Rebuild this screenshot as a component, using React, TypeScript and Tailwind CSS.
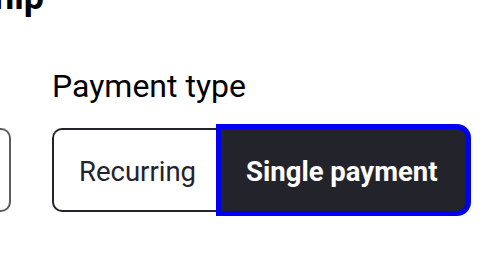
import { useState } from 'react'

type PaymentType = 'recurring' | 'single'

export default function App() {
  const [type, setType] = useState<PaymentType>('single')

  return (
    <div className="w-[500px] h-[264px] overflow-hidden bg-white font-['Roboto','Liberation_Sans',sans-serif] text-[#23232b]">
      {/* page heading, scrolled mostly out of view */}
      <div className="-mt-[23px] w-[44px] flex justify-end">
        <h1 className="shrink-0 whitespace-nowrap text-[36px] leading-[40px] font-bold text-black">Membership</h1>
      </div>

      <div className="mt-[51px] flex items-end gap-[41px]">
        <div className="shrink-0 -ml-[89px] w-[100px] h-[84px] rounded-[10px] border-2 border-[#5c5c5c]" />

        <div className="shrink-0">
          <p className="text-[32px] leading-[36px] text-black mb-[24px]">Payment type</p>
          <div className="flex">
            <button
              type="button"
              onClick={() => setType('recurring')}
              className={[
                'h-[84px] pl-[25px] pr-[24px] pt-[3px] flex items-center border-2 border-r-0 border-[#23232b] rounded-l-[10px] text-[27.5px] whitespace-nowrap',
                type === 'recurring' ? 'bg-[#23232b] text-white font-bold' : 'bg-white text-[#23232b]',
              ].join(' ')}
            >
              Recurring
            </button>
            <button
              type="button"
              onClick={() => setType('single')}
              className={[
                'h-[84px] pl-[24px] pr-[27px] pt-[3px] flex items-center border-2 border-[#23232b] rounded-r-[10px] text-[27.5px] whitespace-nowrap',
                type === 'single'
                  ? 'bg-[#23232b] text-white font-bold outline-[5px] outline-solid outline-[#0000f0] outline-offset-[-1px]'
                  : 'bg-white text-[#23232b]',
              ].join(' ')}
            >
              Single payment
            </button>
          </div>
        </div>
      </div>
    </div>
  )
}
